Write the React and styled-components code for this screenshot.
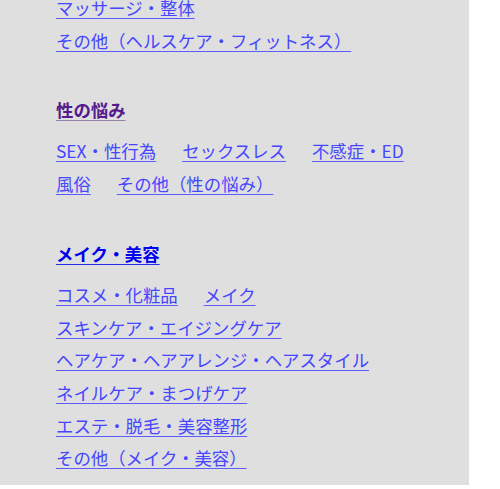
import styled, { createGlobalStyle } from 'styled-components';

const GlobalStyle = createGlobalStyle`
  html, body {
    margin: 0;
    padding: 0;
    background: #ffffff;
    overflow: hidden;
  }
  body {
    font-family: "Noto Sans CJK JP", "Noto Sans", sans-serif;
  }
`;

const Panel = styled.div`
  width: 469px;
  height: 485px;
  background: #dfdfdf;
  box-sizing: border-box;
  padding: 0 14px 0 56px;
  overflow: hidden;
`;

const Section = styled.section`
  margin-bottom: 37px;
`;

const Heading = styled.a`
  display: inline-block;
  font-size: 17.4px;
  line-height: 32px;
  font-weight: 700;
  color: ${(p) => (p.$visited ? '#551a8b' : '#0000ee')};
  text-decoration: underline;
  text-underline-offset: 3px;
  text-decoration-color: ${(p) => (p.$visited ? '#9482a8' : '#2a2aee')};
  margin-bottom: 9px;
`;

const LinkList = styled.ul`
  list-style: none;
  margin: ${(p) => (p.$cut ? '-8px 0 0' : '0')};
  padding: 0;
  display: flex;
  flex-wrap: wrap;
  column-gap: 26px;
`;

const Item = styled.li`
  line-height: 32.7px;
`;

const Link = styled.a`
  font-size: 17.4px;
  color: #4646ff;
  text-decoration: underline;
  text-underline-offset: 3px;
  text-decoration-color: #5c5cff;
`;

const sections = [
  {
    title: null,
    links: ['マッサージ・整体', 'その他（ヘルスケア・フィットネス）'],
  },
  {
    title: '性の悩み',
    visited: true,
    links: ['SEX・性行為', 'セックスレス', '不感症・ED', '風俗', 'その他（性の悩み）'],
  },
  {
    title: 'メイク・美容',
    links: [
      'コスメ・化粧品',
      'メイク',
      'スキンケア・エイジングケア',
      'ヘアケア・ヘアアレンジ・ヘアスタイル',
      'ネイルケア・まつげケア',
      'エステ・脱毛・美容整形',
      'その他（メイク・美容）',
    ],
  },
];

export default function App() {
  return (
    <>
      <GlobalStyle />
      <Panel>
        {sections.map((s, i) => (
          <Section key={i}>
            {s.title && (
              <Heading href="#" $visited={s.visited}>
                {s.title}
              </Heading>
            )}
            <LinkList $cut={!s.title}>
              {s.links.map((l) => (
                <Item key={l}>
                  <Link href="#">{l}</Link>
                </Item>
              ))}
            </LinkList>
          </Section>
        ))}
      </Panel>
    </>
  );
}
